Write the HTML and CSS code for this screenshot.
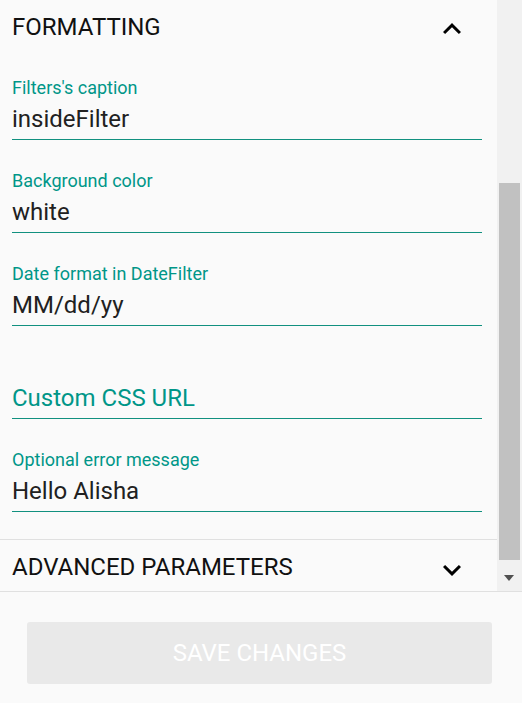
FILE: index.html
```html
<!DOCTYPE html>
<html lang="en">
<head>
<meta charset="utf-8">
<title>Settings</title>
<link rel="stylesheet" href="styles.css">
</head>
<body>
<div class="app">
  <div class="viewport">
    <div class="content">
      <div class="section-head">
        <span class="section-title">FORMATTING</span>
        <svg class="chev chev-up" viewBox="0 0 24 24" width="36" height="36"><path d="M12 8l-6 6 1.41 1.41L12 10.83l4.59 4.58L18 14z"/></svg>
      </div>
      <div class="fields">
        <div class="field">
          <div class="label">Filters's caption</div>
          <div class="value">insideFilter</div>
        </div>
        <div class="field">
          <div class="label">Background color</div>
          <div class="value">white</div>
        </div>
        <div class="field">
          <div class="label">Date format in DateFilter</div>
          <div class="value">MM/dd/yy</div>
        </div>
        <div class="field">
          <div class="label"></div>
          <div class="value placeholder">Custom CSS URL</div>
        </div>
        <div class="field">
          <div class="label">Optional error message</div>
          <div class="value">Hello Alisha</div>
        </div>
      </div>
      <div class="section-head adv">
        <span class="section-title">ADVANCED PARAMETERS</span>
        <svg class="chev chev-down" viewBox="0 0 24 24" width="36" height="36"><path d="M16.59 8.59L12 13.17 7.41 8.59 6 10l6 6 6-6z"/></svg>
      </div>
    </div>
    <div class="scrollbar">
      <div class="track-top"></div>
      <div class="thumb"></div>
      <div class="arrow-wrap"><div class="arrow"></div></div>
    </div>
  </div>
  <div class="footer">
    <button class="save" type="button" disabled>SAVE CHANGES</button>
  </div>
</div>
</body>
</html>
```

FILE: styles.css
```css
* { box-sizing: border-box; }
html, body {
  margin: 0;
  padding: 0;
  background: #fafafa;
}
body {
  font-family: Roboto, "Noto Sans", "Liberation Sans", sans-serif;
  width: 522px;
  height: 703px;
  overflow: hidden;
}
.app {
  display: flex;
  flex-direction: column;
  height: 703px;
}
.viewport {
  display: flex;
  height: 591px;
  flex: none;
}
.content {
  width: 497px;
  flex: none;
  display: flex;
  flex-direction: column;
}
.section-head {
  display: flex;
  justify-content: space-between;
  align-items: flex-start;
  height: 47px;
  padding: 0 27px 0 12px;
}
.section-title {
  font-size: 24px;
  line-height: 28px;
  padding-top: 13px;
  color: #111;
}
.chev { fill: #000; flex: none; }
.chev-up { margin-top: 11px; }
.chev-down { margin-top: 12px; }
.adv {
  height: 51px;
  border-top: 1px solid #e0e0e0;
}
.fields {
  display: flex;
  flex-direction: column;
  padding: 0 15px 27px 12px;
}
.field {
  padding-top: 30px;
  border-bottom: 1px solid #11907f;
}
.label {
  font-size: 18px;
  line-height: 22px;
  height: 22px;
  color: #009688;
}
.value {
  margin-top: 6px;
  font-size: 24px;
  line-height: 28px;
  padding-bottom: 6px;
  color: #212121;
}
.value.placeholder { color: #009688; }
.scrollbar {
  width: 25px;
  flex: none;
  background: #f1f1f1;
  display: flex;
  flex-direction: column;
}
.track-top { height: 183px; flex: none; }
.thumb {
  height: 377px;
  margin: 0 2px;
  background: #c1c1c1;
  flex: none;
}
.arrow-wrap {
  flex: 1;
  display: flex;
  justify-content: center;
  padding-top: 15px;
  padding-right: 1px;
}
.arrow {
  width: 0;
  height: 0;
  border-left: 5px solid transparent;
  border-right: 5px solid transparent;
  border-top: 6px solid #505050;
}
.footer {
  border-top: 1px solid #e0e0e0;
  padding: 30px 30px 0 27px;
  flex: 1;
}
.save {
  display: block;
  width: 465px;
  height: 62px;
  border: none;
  border-radius: 3px;
  background: #e9e9e9;
  color: #ffffff;
  font-family: Roboto, "Noto Sans", "Liberation Sans", sans-serif;
  font-size: 24px;
  padding: 0;
}
```
